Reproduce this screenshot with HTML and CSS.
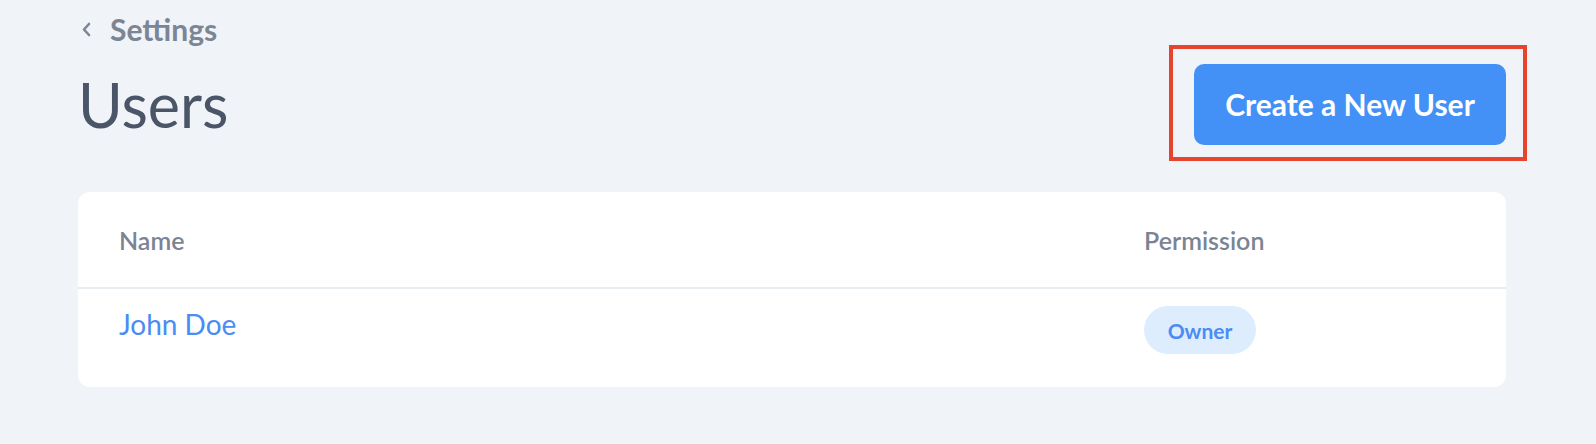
FILE: index.html
```html
<!DOCTYPE html>
<html lang="en">
<head>
  <meta charset="UTF-8" />
  <meta name="viewport" content="width=device-width, initial-scale=1.0" />
  <title>Users</title>
  <link rel="stylesheet" href="styles.css">
</head>
<body>
  <div class="page">
    <a class="back" href="#">
      <svg class="chevron" width="9" height="15" viewBox="0 0 9 15">
        <path d="M7 2 L2 7.5 L7 13" fill="none" stroke="currentColor" stroke-width="2.6" stroke-linecap="round" stroke-linejoin="round"/>
      </svg>
      Settings
    </a>

    <div class="title-row">
      <h1>Users</h1>
      <div class="highlight">
        <button class="btn-primary">Create a New User</button>
      </div>
    </div>

    <div class="card">
      <div class="row row-head">
        <div>Name</div>
        <div>Permission</div>
      </div>
      <div class="row row-body">
        <a class="user-name" href="#">John Doe</a>
        <div><span class="badge">Owner</span></div>
      </div>
    </div>
  </div>
</body>
</html>
```

FILE: styles.css
```css
* {
  box-sizing: border-box;
}

html, body {
  margin: 0;
  padding: 0;
  background: #f0f3f7;
  font-family: 'Lato', 'Open Sans', sans-serif;
}

.page {
  padding: 0 90px 0 78px;
}

.back {
  display: flex;
  align-items: center;
  gap: 19px;
  height: 58px;
  color: #7b8595;
  font-size: 30px;
  font-weight: 700;
  text-decoration: none;
}

.chevron {
  margin-left: 4px;
}

.title-row {
  display: flex;
  align-items: center;
  justify-content: space-between;
  height: 92px;
}

h1 {
  margin: 0;
  font-size: 61px;
  font-weight: 400;
  color: #4a5568;
}

.highlight {
  position: relative;
}

/* red annotation frame round the button */
.highlight::after {
  content: '';
  position: absolute;
  top: -19px;
  right: -21px;
  bottom: -16px;
  left: -25px;
  border: 4px solid #e5452d;
  pointer-events: none;
}

.btn-primary {
  display: block;
  width: 312px;
  height: 81px;
  border: none;
  border-radius: 10px;
  background: #4391f6;
  color: #fff;
  font-family: inherit;
  font-size: 30px;
  font-weight: 700;
  cursor: pointer;
}

.card {
  margin-top: 42px;
  background: #fff;
  border-radius: 12px;
}

.row {
  display: grid;
  grid-template-columns: 1fr 362px;
  padding-left: 41px;
}

.row-head {
  height: 97px;
  align-items: center;
  border-bottom: 2px solid #e8edf2;
  color: #7a8493;
  font-size: 25px;
  font-weight: 600;
}

.row-body {
  height: 98px;
  align-items: start;
  padding-top: 17px;
}

.user-name {
  line-height: 36px;
  font-size: 28px;
  color: #4a8cf5;
  text-decoration: none;
}

.badge {
  display: inline-flex;
  align-items: center;
  justify-content: center;
  width: 112px;
  height: 48px;
  border-radius: 24px;
  background: #ddedfd;
  color: #4a8cf5;
  font-size: 21px;
  font-weight: 700;
}
```
